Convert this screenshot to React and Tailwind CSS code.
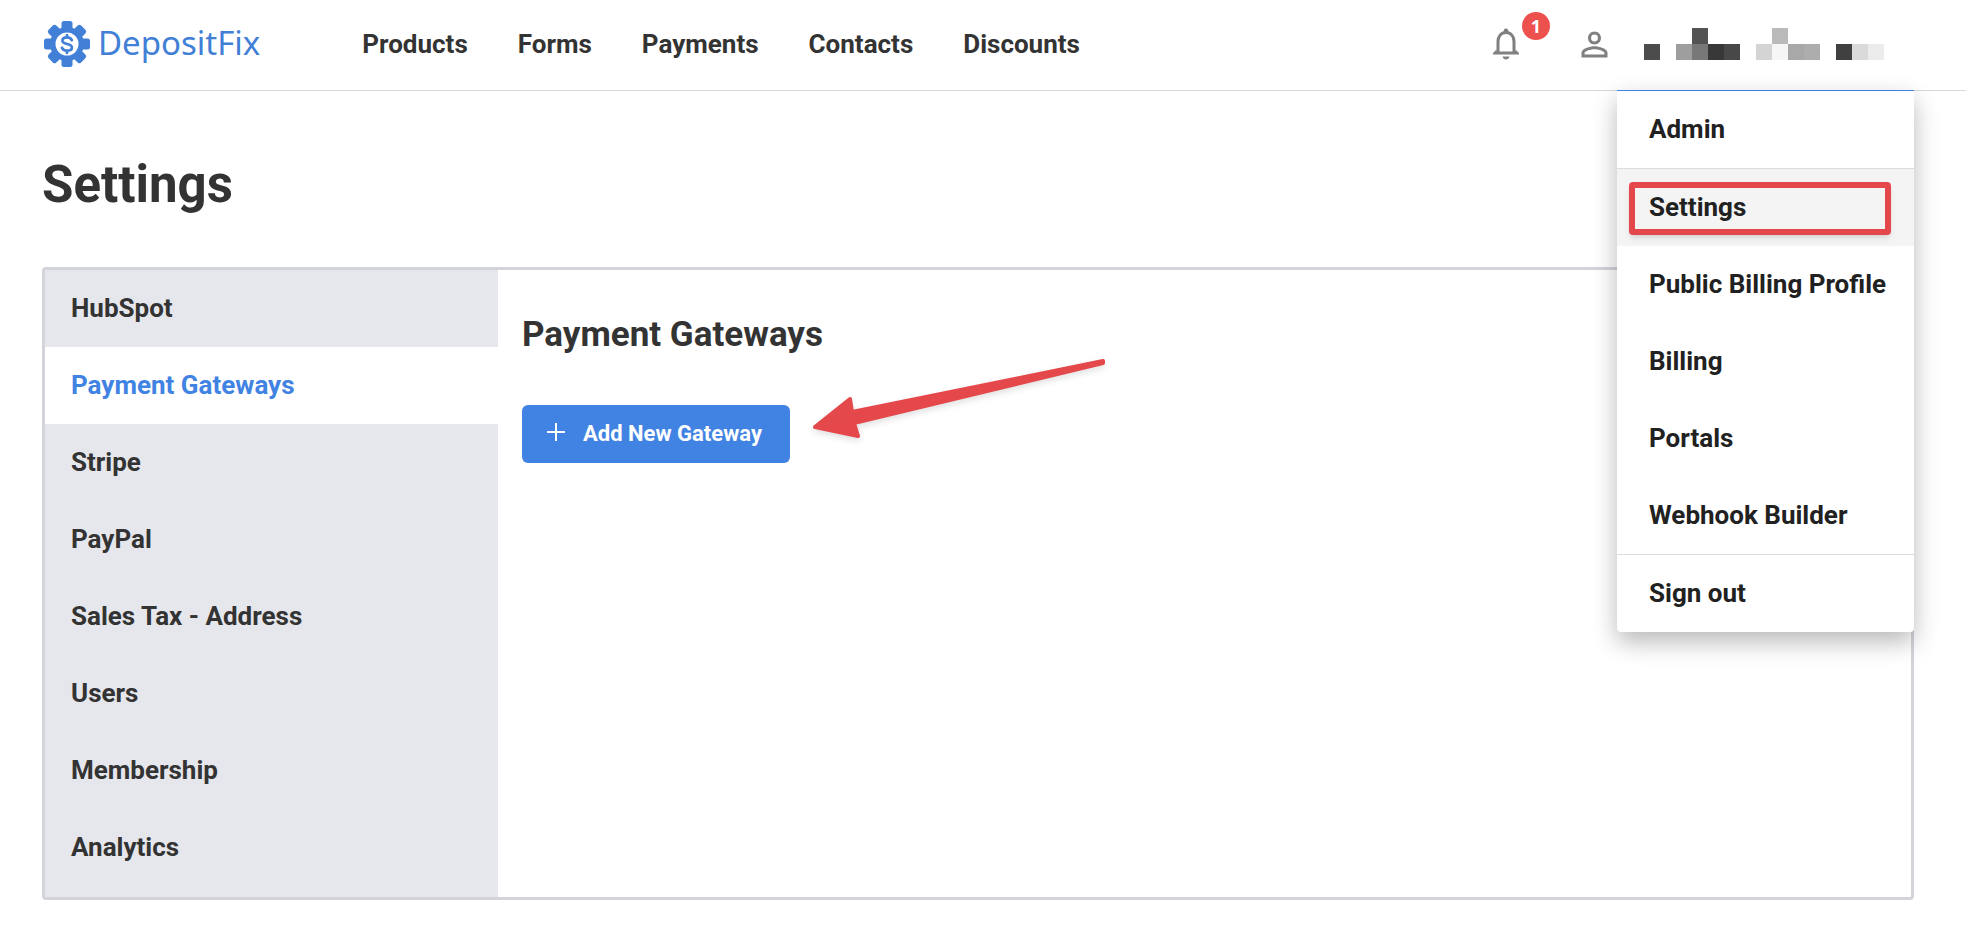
import { MdPersonOutline } from "react-icons/md";

const navLinks = ["Products", "Forms", "Payments", "Contacts", "Discounts"];

const settingsTabs = [
	"HubSpot",
	"Payment Gateways",
	"Stripe",
	"PayPal",
	"Sales Tax - Address",
	"Users",
	"Membership",
	"Analytics",
];

const menuGroups = [
	["Admin"],
	["Settings", "Public Billing Profile", "Billing", "Portals", "Webhook Builder"],
	["Sign out"],
];

// Redacted account name, one entry per 16px cell: [column, row, fill]
const nameCells = [
	[0, 1, "#4c4c4c"],
	[2, 1, "#9e9e9e"],
	[3, 0, "#535353"],
	[3, 1, "#787878"],
	[4, 1, "#383838"],
	[5, 1, "#484848"],
	[7, 1, "#d4d4d4"],
	[8, 0, "#bababa"],
	[8, 1, "#f6f6f6"],
	[9, 1, "#a8a8a8"],
	[10, 1, "#adadad"],
	[12, 1, "#404040"],
	[13, 1, "#dadada"],
	[14, 1, "#ececec"],
];

function Logo() {
	return (
		<a href="#" className="flex items-center gap-2 text-[#4180d6]">
			<svg viewBox="0 0 46 46" className="h-[46px] w-[46px]">
				<g fill="currentColor">
					<circle cx="23" cy="23" r="17" />
					{[0, 45, 90, 135].map((angle) => (
						<rect
							key={angle}
							x="17.5"
							y="0"
							width="11"
							height="46"
							rx="2.5"
							transform={`rotate(${angle} 23 23)`}
						/>
					))}
				</g>
				<circle cx="23" cy="23" r="11.5" fill="#fff" />
				<path
					d="M27.8 19.2c-.7-1.9-2.4-2.8-4.8-2.8-2.8 0-4.6 1.3-4.6 3.3 0 4.5 9.5 2.1 9.5 6.7 0 2.1-2 3.3-4.9 3.3-2.7 0-4.5-1.1-5.1-3M23 14v2.5M23 29.5V32"
					fill="none"
					stroke="currentColor"
					strokeWidth="2.7"
					strokeLinecap="round"
				/>
			</svg>
			<span className="pb-0.5 font-['Noto_Sans',sans-serif] text-[33px] leading-10 font-normal">
				DepositFix
			</span>
		</a>
	);
}

function BellIcon() {
	return (
		<svg viewBox="0 0 26 32" className="h-8 w-[26px]">
			<path
				d="M5 25V13.5C5 8.5 8 4.5 13 4.5s8 4 8 9V25"
				fill="none"
				stroke="#808080"
				strokeWidth="3"
			/>
			<path
				d="M10.5 4a2.5 3.5 0 0 1 5 0zM3.5 21.5 0 25v1.5h26V25l-3.5-3.5v2h-19zM9.500 28.5h7c-.5 2-1.8 3-3.5 3s-3-1-3.5-3z"
				fill="#808080"
			/>
		</svg>
	);
}

function AccountMenu() {
	return (
		<div className="absolute top-full right-0 z-10 w-[297px] divide-y divide-[#dcdcdc] rounded-b border-t border-[#4183e2] bg-white text-[#212121] shadow-[0_10px_24px_rgba(0,0,0,0.28)]">
			{menuGroups.map((group) => (
				<ul key={group[0]}>
					{group.map((item) => (
						<li
							key={item}
							className={item === "Settings" ? "relative bg-[#f4f4f4]" : ""}
						>
							<a
								href="#"
								className="flex h-[77px] items-center pb-0.5 pl-8 whitespace-nowrap"
							>
								{item}
							</a>
							{item === "Settings" && (
								<div className="pointer-events-none absolute top-[13px] right-[23px] bottom-[11px] left-3 rounded border-[6px] border-[#e5484b] shadow-md" />
							)}
						</li>
					))}
				</ul>
			))}
		</div>
	);
}

function Header() {
	return (
		<header className="border-b border-[#d9d9dc] pr-[52px] pl-[44px]">
			<div className="relative flex h-[90px] items-center pb-0.5">
				<Logo />
				<nav className="ml-[102px] flex gap-[50px]">
					{navLinks.map((link) => (
						<a key={link} href="#">
							{link}
						</a>
					))}
				</nav>
				<div className="ml-auto flex items-center pr-[30px]">
					<button aria-label="Notifications" className="relative mr-[56px]">
						<BellIcon />
						<span className="absolute -top-4 left-[29px] flex h-7 w-7 items-center justify-center rounded-full bg-[#ec514e] font-['Open_Sans',sans-serif] text-lg text-white">
							1
						</span>
					</button>
					<MdPersonOutline size={39} color="#808080" />
					<button aria-label="Account menu" className="ml-[30px]">
						<svg viewBox="0 0 240 32" className="h-8 w-60">
							{nameCells.map(([col, row, fill]) => (
								<rect
									key={`${col}-${row}`}
									x={col * 16}
									y={row * 16}
									width="16"
									height="16"
									fill={fill}
								/>
							))}
						</svg>
					</button>
				</div>
				<AccountMenu />
			</div>
		</header>
	);
}

function Arrow() {
	return (
		<svg
			viewBox="0 0 330 110"
			className="pointer-events-none absolute bottom-0 left-full h-[110px] w-[330px] drop-shadow-md"
		>
			<path
				d="M25 74 60 46 62 59 313 8 313 10 64 70 68 83z"
				fill="#e5484b"
				stroke="#e5484b"
				strokeWidth="4"
				strokeLinejoin="round"
			/>
		</svg>
	);
}

export default function App() {
	return (
		<div className="bg-white font-[Roboto,sans-serif] text-[26px] leading-8 font-bold text-[#333]">
			<Header />
			<main className="pt-16 pr-[52px] pb-11 pl-[42px]">
				<h1 className="text-[51px] leading-[60px]">Settings</h1>
				<section className="mt-[52px] flex rounded border-[3px] border-[#d3d4da]">
					<ul className="w-[453px] shrink-0 bg-[#e6e7ec] pb-[11px]">
						{settingsTabs.map((tab) => (
							<li key={tab}>
								<a
									href="#"
									className={`flex h-[77px] items-center px-[26px] pb-0.5 ${
										tab === "Payment Gateways" ? "bg-white text-[#4183e2]" : ""
									}`}
								>
									{tab}
								</a>
							</li>
						))}
					</ul>
					<div className="flex-1 px-6 pt-[45px]">
						<h2 className="text-[35px] leading-10">Payment Gateways</h2>
						<div className="relative mt-[50px] inline-block">
							<button className="flex h-[58px] items-center rounded-md bg-[#4183e2] pr-7 pl-[25px] text-[22px] text-white">
								<svg viewBox="0 0 18 18" className="mr-[18px] mb-1 h-[18px] w-[18px]">
									<path d="M9 0v18M0 9h18" stroke="#fff" strokeWidth="2" />
								</svg>
								Add New Gateway
							</button>
							<Arrow />
						</div>
					</div>
				</section>
			</main>
		</div>
	);
}
